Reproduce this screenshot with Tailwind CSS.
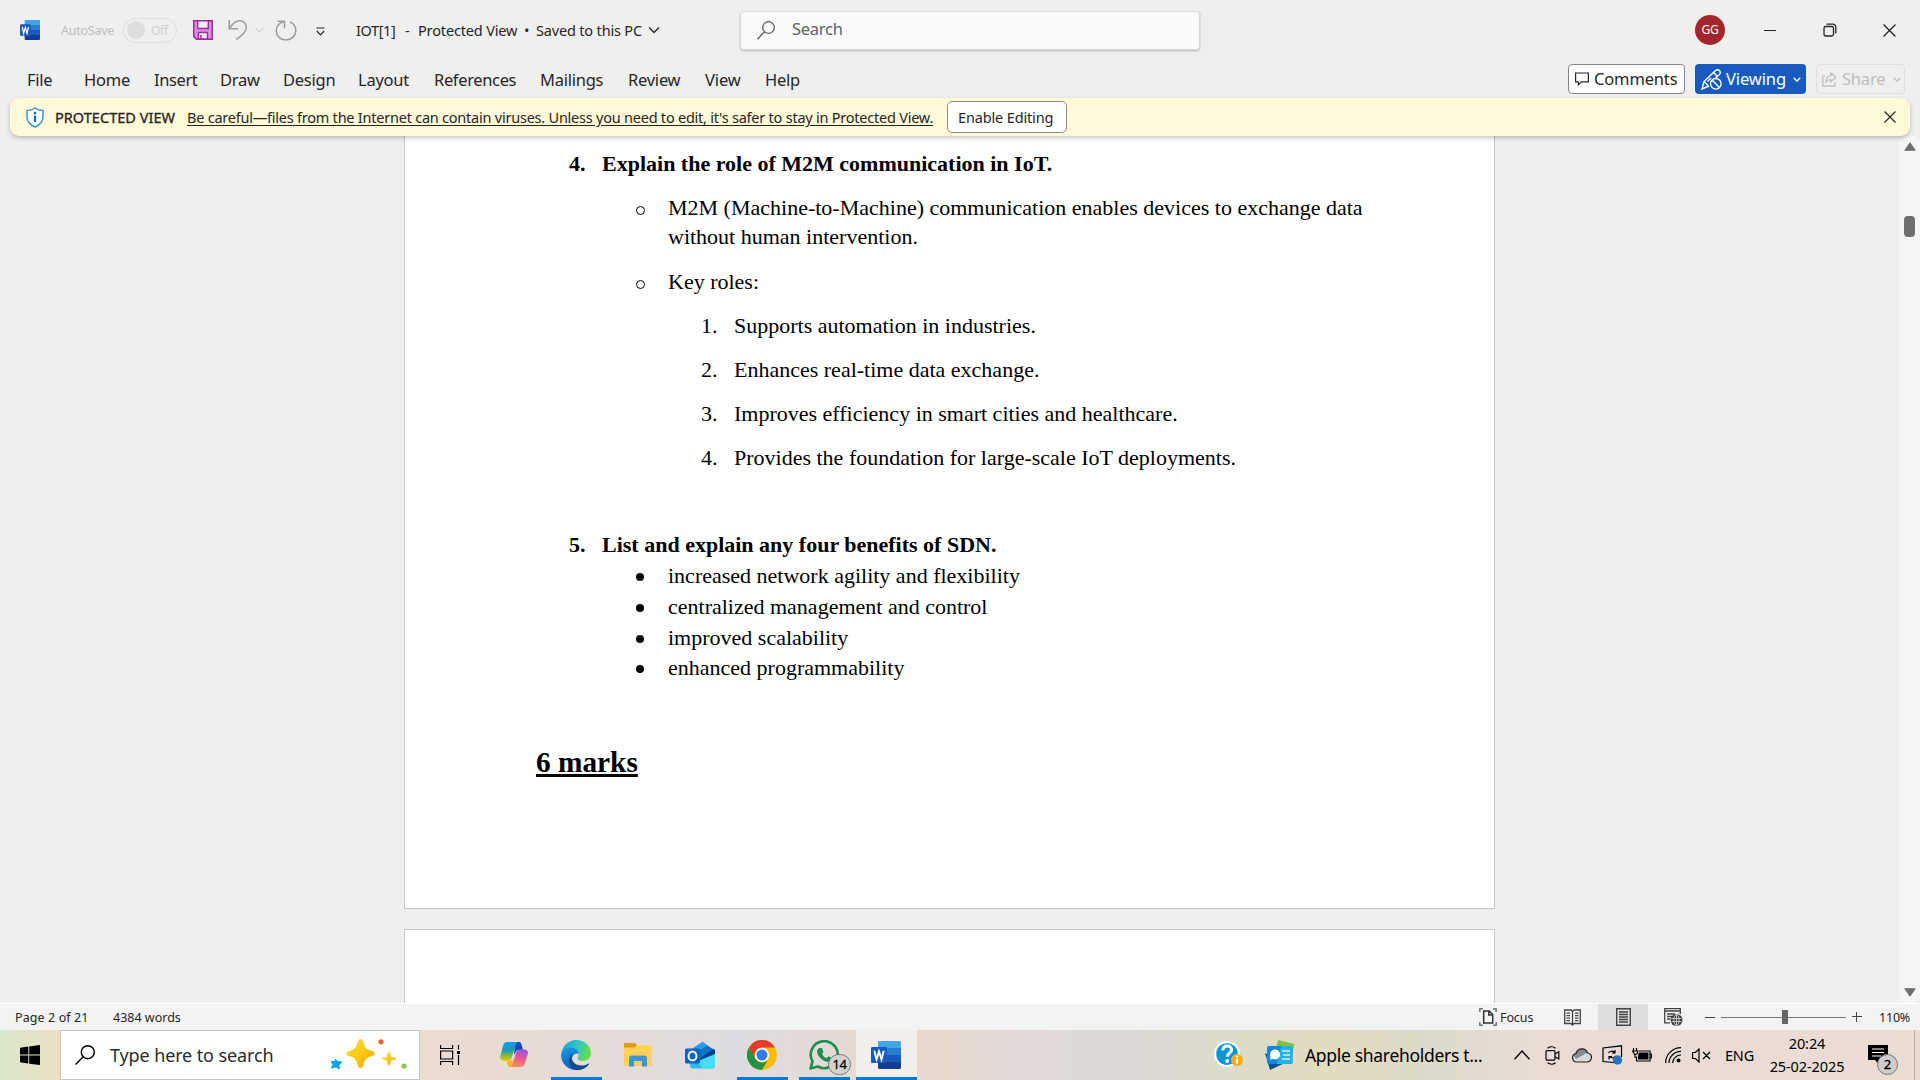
<!DOCTYPE html>
<html lang="en">
<head>
<meta charset="utf-8">
<title>IOT[1] - Protected View - Word</title>
<script src="https://cdn.jsdelivr.net/npm/@tailwindcss/browser@4"></script>
</head>
<body class="flex h-[1080px] w-[1920px] flex-col overflow-hidden bg-[#efefef] font-['Noto_Sans','Open_Sans',sans-serif] text-[#262626] whitespace-nowrap">

<svg class="hidden">
  <symbol id="word" viewBox="0 0 30 28">
    <path d="M8 0h20.500a1.500 1.500 0 0 1 1.500 1.500V7H7V1.500A1.500 1.500 0 0 1 8 0z" fill="#41a5ee"/>
    <path d="M7 7h23v7H7z" fill="#2b7cd3"/><path d="M7 14h23v7H7z" fill="#185abd"/>
    <path d="M7 21h23v5.500a1.500 1.500 0 0 1-1.500 1.500H8.500A1.500 1.500 0 0 1 7 26.500z" fill="#103f91"/>
    <rect x="0" y="6" width="16" height="16" rx="1.300" fill="#185abd"/>
    <path d="M3.300 9.800l2.200 8.600 2.500-8 2.500 8 2.200-8.600" fill="none" stroke="#fff" stroke-width="1.900"/>
  </symbol>
  <symbol id="chev" viewBox="0 0 12 8"><path d="M1 1.500l5 5 5-5" fill="none" stroke="currentColor" stroke-width="1.300"/></symbol>
  <symbol id="x" viewBox="0 0 12 12"><path d="M.5.5l11 11M11.500.5l-11 11" fill="none" stroke="currentColor" stroke-width="1.200"/></symbol>
</svg>

<!-- Title bar -->
<header class="flex h-[60px] shrink-0 items-center text-[14.5px] tracking-[-0.250px]">
  <svg class="ml-5 h-5 w-5" viewBox="0 0 30 28" preserveAspectRatio="none"><use href="#word"/></svg>
  <span class="ml-[21px] w-[62px] pt-[2px] text-[12.5px] text-[#bebebe]">AutoSave</span>
  <div class="flex h-[25px] w-[54px] items-center rounded-full border border-[#dedede] pl-[3px]">
    <span class="h-[18px] w-[18px] rounded-full bg-[#dedede]"></span>
    <span class="ml-[6px] pt-[1px] text-[12px] text-[#cfcfcf]">Off</span>
  </div>
  <svg class="ml-4 h-5 w-5" viewBox="0 0 20 20"><path d="M.75.750h18.500v18.500H3.500L.75 16.500z" fill="#d98fdc" stroke="#9a2d9f" stroke-width="1.500"/><path d="M4.700.8h10.600v7.700H4.700zM5.500 19v-6.500h9V19z" fill="#efefef" stroke="#9a2d9f" stroke-width="1.400"/><path d="M8 15v4" stroke="#9a2d9f" stroke-width="1.500"/></svg>
  <svg class="ml-[15px] h-5 w-5" viewBox="0 0 20 20" fill="none" stroke="#9b9b9b" stroke-width="1.500"><path d="M1.200 0v8.800H10M1.500 8.500C4 4.500 7.500.8 11.500.8c4 0 6.800 2.800 6.800 6.400 0 4.300-4.300 8.500-10.300 12.300"/></svg>
  <svg class="ml-[7px] h-[6px] w-[9px] text-[#bdbdbd]"><use href="#chev"/></svg>
  <svg class="ml-[11px] h-[21px] w-[22px]" viewBox="0 0 22 21" fill="none" stroke="#9b9b9b" stroke-width="1.500"><path d="M2.500 1.200h7v7M9.300 1.500C4.600 2.300 1.200 6 1.200 10.800c0 5.200 4.300 9.200 9.800 9.200s9.800-4 9.800-9.200c0-4.300-2.400-7.400-5.800-8.800"/></svg>
  <svg class="mt-[2px] ml-[19px] h-[9px] w-[9px]" viewBox="0 0 9 9" fill="none" stroke="#262626" stroke-width="1.200"><path d="M.5 1h8M.8 4l3.700 3.800L8.200 4"/></svg>
  <div class="mt-[1px] flex">
    <span class="ml-[31px] w-[49px] tracking-[-0.400px]">IOT[1]</span><span class="w-[13px]">-</span>
    <span class="w-[106px] tracking-[-0.150px]">Protected View</span><span class="w-[12px]">•</span><span class="w-[112px] tracking-[-0.170px]">Saved to this PC</span>
  </div>
  <svg class="h-[8px] w-[12px]"><use href="#chev"/></svg>
  <div class="ml-[80px] flex h-[39px] w-[460px] items-center rounded-[4px] border border-[#dcdcdc] bg-[#fafafa] shadow-[0_1px_2px_rgba(0,0,0,0.250)]">
    <svg class="ml-4 h-[19px] w-[18px]" viewBox="0 0 18 19" fill="none" stroke="#616161" stroke-width="1.300"><circle cx="11.500" cy="6.500" r="5.800"/><path d="M7.500 10.700L.5 18.300"/></svg>
    <span class="ml-[17px] -mt-px text-[16.5px] text-[#616161]">Search</span>
  </div>
  <span class="ml-[495px] flex h-[30px] w-[30px] items-center justify-center rounded-full bg-[#a4262c] text-[12px] text-white">GG</span>
  <span class="ml-[39px] h-[1px] w-[12px] bg-[#262626]"></span>
  <svg class="ml-[47px] h-[14px] w-[14px]" viewBox="0 0 14 14" fill="none" stroke="#262626" stroke-width="1.300"><rect x="1" y="3.500" width="9.500" height="9.500" rx="1.800"/><path d="M3.500 1.200h6.300a3 3 0 0 1 3 3v6.300"/></svg>
  <svg class="ml-[46px] h-[13px] w-[13px]"><use href="#x"/></svg>
</header>

<!-- Ribbon tabs -->
<nav class="flex h-[38px] shrink-0 items-center pl-[27px] text-[16.5px] tracking-[-0.250px]">
  <div class="flex w-[1541px] pt-[2px]">
    <span class="w-[57px]">File</span><span class="w-[70px]">Home</span><span class="w-[66px] tracking-[-0.400px]">Insert</span><span class="w-[63px]">Draw</span><span class="w-[75px]">Design</span><span class="w-[76px]">Layout</span><span class="w-[106px] tracking-[-0.350px]">References</span><span class="w-[88px]">Mailings</span><span class="w-[77px]">Review</span><span class="w-[60px] tracking-[-0.100px]">View</span><span>Help</span>
  </div>
  <div class="flex h-[30px] w-[117px] items-center rounded-[4px] border border-[#858585] bg-white pl-[6px] tracking-[-0.150px]">
    <svg class="h-[14px] w-[14px]" viewBox="0 0 14 14" fill="none" stroke="#262626" stroke-width="1.200"><path d="M.6 1h12.800v8.800H6.500L3.300 12.800V9.800H.6z"/></svg>
    <span class="ml-[5px]">Comments</span>
  </div>
  <div class="ml-[10px] flex h-[30px] w-[111px] items-center rounded-[4px] bg-[#185abd] pl-[6px] text-white tracking-[-0.100px]">
    <svg class="h-[21px] w-[21px]" viewBox="0 0 21 21" fill="none" stroke="#fff" stroke-width="1.400"><path d="M8 17l-7 3 2-7.500L14.500 1.500c1.300-1.200 3-1 4 .1s1 2.700-.1 3.800L14.500 9M12.500 3.500l4.300 4.300M3 12.500l4 4M10 9L6.500 12.500"/><circle cx="14.800" cy="14.800" r="5.300"/><path d="M11 11l7.500 7.500"/></svg>
    <span class="ml-[4px] w-[67px]">Viewing</span>
    <svg class="h-[5px] w-[8px]" viewBox="0 0 8 5"><path d="M.7.700L4 4 7.300.7" fill="none" stroke="#fff" stroke-width="1.300"/></svg>
  </div>
  <div class="ml-[10px] flex h-[30px] w-[89px] items-center rounded-[4px] border border-[#dfdfdf] pl-[5px] text-[#bdbdbd] tracking-[-0.200px]">
    <svg class="h-[15px] w-[15px]" viewBox="0 0 15 15" fill="none" stroke="#bdbdbd" stroke-width="1.200"><path d="M3.500 4H.8v10.200h12V10M8.800 1l5 4.500-5 4.300V7.500C6.500 7.500 4.800 8.500 3.500 10.300 4 6.500 5.800 4 8.800 3.500z"/></svg>
    <span class="ml-[5px] w-[51px]">Share</span>
    <svg class="h-[5px] w-[8px]" viewBox="0 0 8 5"><path d="M.7.700L4 4 7.300.7" fill="none" stroke="#bdbdbd" stroke-width="1.300"/></svg>
  </div>
</nav>

<!-- Protected view banner -->
<div class="z-10 mx-[10px] flex h-[38px] shrink-0 items-center rounded-[9px] bg-[#fef9d6] pl-[16px] text-[14.5px] tracking-[-0.230px] shadow-[0_2px_4px_rgba(0,0,0,0.230)]">
  <svg class="h-[21px] w-[18px]" viewBox="0 0 18 21"><path d="M9 1c2.300 1.700 4.700 2.500 8 2.600v6.200c0 4.900-3 8.100-8 10.200-5-2.100-8-5.300-8-10.200V3.600C4.300 3.500 6.700 2.700 9 1z" fill="#fff" stroke="#3596d3" stroke-width="1.500"/><path d="M9 8.500V15" stroke="#0f6cbd" stroke-width="2.200"/><circle cx="9" cy="6" r="1.300" fill="#0f6cbd"/></svg>
  <span class="ml-[11px] w-[132px] pt-[1px] tracking-[0.030px] [-webkit-text-stroke:0.300px_#262626]">PROTECTED VIEW</span>
  <span class="w-[760px] pt-[1px] underline underline-offset-[2px]">Be careful—files from the Internet can contain viruses. Unless you need to edit, it's safer to stay in Protected View.</span>
  <span class="flex h-[32px] w-[120px] items-center rounded-[5px] border border-[#8a8a8a] bg-white pt-[1px] pl-[10px] tracking-[-0.150px]">Enable Editing</span>
  <svg class="ml-[817px] h-[12px] w-[12px]"><use href="#x"/></svg>
</div>

<!-- Document area -->
<main class="flex h-[867px] shrink-0">
  <div class="ml-[404px] mr-[404px] flex w-[1091px] flex-col gap-5 overflow-hidden">
    <article class="flex h-[773px] shrink-0 flex-col border border-t-0 border-[#c6c6c6] bg-white pt-[13px] font-['Liberation_Serif','Times_New_Roman',serif] text-[22px] leading-[29px] text-black">
      <h3 class="ml-[164px] flex font-bold"><span class="w-[33px]">4.</span>Explain the role of M2M communication in IoT.</h3>
      <div class="mt-[15px] ml-[231px] flex"><span class="mt-[13px] mr-[23px] h-[9px] w-[9px] rounded-full border border-black"></span><p>M2M (Machine-to-Machine) communication enables devices to exchange data<br>without human intervention.</p></div>
      <div class="mt-[16px] ml-[231px] flex"><span class="mt-[13px] mr-[23px] h-[9px] w-[9px] rounded-full border border-black"></span><p>Key roles:</p></div>
      <ol class="mt-[15px] ml-[296px] flex flex-col gap-[15px]">
        <li class="flex"><span class="w-[33px]">1.</span>Supports automation in industries.</li>
        <li class="flex"><span class="w-[33px]">2.</span>Enhances real-time data exchange.</li>
        <li class="flex"><span class="w-[33px]">3.</span>Improves efficiency in smart cities and healthcare.</li>
        <li class="flex"><span class="w-[33px]">4.</span>Provides the foundation for large-scale IoT deployments.</li>
      </ol>
      <h3 class="mt-[58px] ml-[164px] flex font-bold"><span class="w-[33px]">5.</span>List and explain any four benefits of SDN.</h3>
      <ul class="mt-[2px] ml-[231px] flex flex-col gap-[2px]">
        <li class="flex items-center"><span class="mt-[2px] mr-[24px] h-[8px] w-[8px] rounded-full bg-black"></span>increased network agility and flexibility</li>
        <li class="flex items-center"><span class="mt-[2px] mr-[24px] h-[8px] w-[8px] rounded-full bg-black"></span>centralized management and control</li>
        <li class="flex items-center"><span class="mt-[2px] mr-[24px] h-[8px] w-[8px] rounded-full bg-black"></span>improved scalability</li>
        <li class="-mt-px flex items-center"><span class="mt-[2px] mr-[24px] h-[8px] w-[8px] rounded-full bg-black"></span>enhanced programmability</li>
      </ul>
      <h2 class="mt-[60px] ml-[131px] text-[29.33px] leading-[40px] font-bold underline decoration-[3px] underline-offset-[2px]">6 marks</h2>
    </article>
    <article class="h-[200px] shrink-0 border border-[#c6c6c6] bg-white"></article>
  </div>
  <div class="flex w-[21px] flex-col items-center rounded-[8px] bg-[#f5f5f5]">
    <svg class="mt-[6px] h-[9px] w-[12px]" viewBox="0 0 12 9"><path d="M6 .8L11.200 8.300H.8z" fill="#6e6e6e" stroke="#6e6e6e" stroke-linejoin="round"/></svg>
    <span class="mt-[65px] h-[21px] w-[11px] rounded-[4px] bg-[#6e6e6e]"></span>
    <svg class="mt-[751px] h-[9px] w-[12px]" viewBox="0 0 12 9"><path d="M6 8.200L11.200.7H.8z" fill="#6e6e6e" stroke="#6e6e6e" stroke-linejoin="round"/></svg>
  </div>
</main>

<!-- Status bar -->
<section class="flex h-[27px] shrink-0 items-center border-t border-white bg-[#f3f3f3] pl-[15px] text-[12.5px]">
  <span class="w-[98px] pt-[2px] tracking-[0.100px]">Page 2 of 21</span><span class="w-[1366px] pt-[2px]">4384 words</span>
  <svg class="h-[18px] w-[18px]" viewBox="0 0 18 18" fill="none" stroke="#333" stroke-width="1.500"><path d="M.8 4V.8H4M14 .8h3.200V4M.8 14v3.200H4M14 17.200h3.200V14" stroke="#777"/><path d="M4.700 3h5.500l3.500 3.500V15h-9zM9.800 3v4h4"/></svg>
  <span class="ml-[3px] w-[64px] pt-[2px] tracking-[-0.100px]">Focus</span>
  <svg class="h-[17px] w-[17px]" viewBox="0 0 17 17" fill="none" stroke="#444" stroke-width="1.300"><path d="M8.500 2.500L7 1H.7v13.500H7l1.500 1.500L10 14.500h6.300V1H10zM8.500 2.500V16M2.500 4.200H6M2.500 6.700H6M2.500 9.200H6M2.500 11.700H6M11 4.200h3.500M11 6.700h3.500M11 9.200h3.500M11 11.700h3.500"/></svg>
  <div class="ml-[17px] flex h-[26px] w-[50px] items-center justify-center bg-[#dedede]"><svg class="h-[18px] w-[15px]" viewBox="0 0 15 18" fill="none" stroke="#444" stroke-width="1.400"><path d="M.7.700h13.600v16.600H.7zM3 4h9M3 6.500h9M3 9h9M3 11.500h9M3 14h9"/></svg></div>
  <svg class="ml-4 h-[18px] w-[19px]" viewBox="0 0 19 18" fill="none" stroke="#444" stroke-width="1.300"><path d="M6 14.800H.7V.7h15.600V6M.7 3h15.600M3 6h8M3 8.500h5M3 11h3"/><circle cx="12.500" cy="12" r="6" fill="#3c3c3c" stroke="none"/><path d="M7.500 10.500h10M7.500 13.500h10M12.500 6.500v11" stroke="#e5e5e5" stroke-width=".8"/><ellipse cx="12.500" cy="12" rx="2.700" ry="5.300" stroke="#e5e5e5" stroke-width=".8"/></svg>
  <span class="ml-[22px] h-[1px] w-[10px] bg-[#444]"></span>
  <div class="ml-[6px] flex h-[14px] w-[125px] items-center"><span class="h-[1px] w-[61px] bg-[#777]"></span><span class="h-[14px] w-[6px] bg-[#666]"></span><span class="h-[1px] w-[58px] bg-[#777]"></span></div>
  <svg class="ml-[6px] h-[10px] w-[10px]" viewBox="0 0 10 10" stroke="#444"><path d="M0 4.500h10M4.500 0v10"/></svg>
  <span class="ml-[17px] pt-[2px] tracking-[-0.200px]">110%</span>
</section>

<!-- Taskbar -->
<footer class="flex h-[50px] shrink-0 items-center bg-[linear-gradient(90deg,#d9e8cc_0px,#ebdfc2_60px,#eddccf_420px,#e6dbd5_560px,#dedce0_740px,#e6dad3_850px,#e8d9ce_940px,#e2dad8_1020px,#dcd9d6_1130px,#dedcc9_1240px,#e2dcc0_1320px,#dcdac8_1420px,#e2dcd0_1480px,#eadcd5_1540px,#eadcd5_1750px,#ebddd2_1920px)] text-black">
  <div class="flex h-[50px] w-[60px] items-center justify-center"><svg class="h-5 w-5" viewBox="0 0 20 20"><path d="M0 2.800L8.300 1.500V9.500H0zM9.200 1.400L20 0v9.500H9.200zM0 10.500h8.300v8.100L0 17.300zM9.200 10.500H20V20L9.200 18.700z"/></svg></div>
  <div class="flex h-[50px] w-[360px] items-center border border-[#c6c6c6] bg-white pl-[14px]">
    <svg class="h-5 w-5" viewBox="0 0 20 20" fill="none" stroke="#000" stroke-width="1.400"><circle cx="12.800" cy="7.200" r="6.500"/><path d="M8.200 11.800L.5 19.500"/></svg>
    <span class="ml-[15px] w-[221px] text-[18px] tracking-[-0.120px] text-[#2b2b2b]">Type here to search</span>
    <svg class="h-[32px] w-[76px]" viewBox="0 0 76 32"><defs><linearGradient id="gold" x2="1" y2="1"><stop stop-color="#ffe04a"/><stop offset=".55" stop-color="#fdc60e"/><stop offset="1" stop-color="#ee9d1c"/></linearGradient></defs><path d="M29.500 0c2 0 2.500 1.500 3.300 4.500 1.200 4 2.500 5.500 6 6.700 3.500 1.100 5 1.600 5 3.300s-1.500 2.200-5 3.300c-3.500 1.200-4.800 2.700-6 6.700-.8 3-1.300 4.500-3.300 4.500s-2.500-1.500-3.300-4.500c-1.200-4-2.500-5.500-6-6.700-3.500-1.100-5-1.600-5-3.300s1.500-2.200 5-3.300c3.500-1.200 4.800-2.700 6-6.700C27 1.500 27.500 0 29.500 0z" fill="url(#gold)"/><path d="M58 12.500c1.200 0 1.300 4.500 2.500 5.500s4.500 0 4.500 1.500-3.300.8-4.500 2-1.200 5-2.500 5-1.300-4-2.500-5-4.500-.5-4.500-2 3.300-.5 4.500-1.500 1.200-5.500 2.500-5.500z" fill="url(#gold)"/><path d="M4.500 20l2.300 2.700 4.200.3-3 2.700.3 4.300-3.300-2-4.500 1 1.500-3.700L0 22.500l4 .2z" fill="#00a9ee" stroke="#00a9ee" stroke-linejoin="round"/><circle cx="50" cy="2.800" r="2.600" fill="#f4652c"/><circle cx="73" cy="27" r="2.600" fill="#8dc73f"/></svg>
  </div>
  <svg class="ml-5 h-5 w-5" viewBox="0 0 20 20" fill="none" stroke="#000" stroke-width="1.200"><path d="M.6 0v3.500h12V0M.6 20v-3.500h12V20M.6 6h12v8H.6zM18.500 0v4.500M18.500 10v10"/><path d="M17 6h3v3h-3z" fill="#000" stroke="none"/></svg>
  <!-- Copilot -->
  <svg class="ml-[40px] h-[26px] w-[28px]" viewBox="0 0 28 26"><defs><linearGradient id="cpa" x2="0" y2="1"><stop stop-color="#159df0"/><stop offset=".4" stop-color="#1599c0"/><stop offset=".7" stop-color="#7cb846"/><stop offset="1" stop-color="#f5ca16"/></linearGradient><linearGradient id="cpb" x1=".5" x2=".2" y2="1"><stop stop-color="#a54fe0"/><stop offset=".5" stop-color="#ef5a92"/><stop offset="1" stop-color="#fb9550"/></linearGradient></defs>
    <path d="M15 0h4c2 0 2.500 2 3.200 5l.8 3h-6l-3 5z" fill="#1547b8"/><path d="M8 18l5 .500-1 6.500H10c-1.500 0-2.300-1.500-3-4z" fill="#f8b52a"/>
    <path d="M7 0h11c-2 1-2.500 3-3 5l-3 10c-.8 2.500-2 4-4.500 4H4c-3 0-4.500-2-3.700-5L3 4C3.700 1.500 5 0 7 0z" fill="url(#cpa)"/>
    <path d="M20 7.500h4.500c2.500 0 4 2 3.300 4.500L25 21c-.8 2.500-2.300 4-4.500 4H9.500c2-.500 2.700-2 3.300-4L16 11c.8-2.500 2-3.500 4-3.500z" fill="url(#cpb)"/></svg>
  <!-- Edge -->
  <div class="ml-[23px] flex h-[50px] w-[51px] flex-col border-b-[3px] border-[#0078d7] pt-[10px] pl-[10px]">
    <svg class="h-[30px] w-[30px] shrink-0" viewBox="0 0 30 30"><defs><linearGradient id="eda" x2="1" y2=".3"><stop stop-color="#1b9de2"/><stop offset=".55" stop-color="#2cc3c9"/><stop offset="1" stop-color="#62dd52"/></linearGradient><linearGradient id="edb" x2=".4" y2="1"><stop stop-color="#1d9ce0"/><stop offset="1" stop-color="#0b62c4"/></linearGradient></defs>
      <path d="M1 11C3 4 8.500 0 15 0c8.500 0 15 6 15 13 0 5-3.500 8-8 8-3.500 0-5.500-1.300-5.500-2.500 0-1 1.200-1.500 1.200-4C17.700 11 14.500 8 10.500 8 6 8 2 10 0 15z" fill="url(#eda)"/>
      <path d="M0 15C1 10 5 7.500 10 7.500c4.500 0 7.500 3 7.700 6.500-4-2-8 2-6.200 8 1 3.500 3.500 6.500 7.500 7.500-2 .500-3 .500-4 .500C6.500 30 0 23 0 15z" fill="url(#edb)"/>
      <path d="M10.500 17c0 5 5 8.500 10 8.500 3 0 5-.8 6.500-1.800.8-.5 1.200.2.800.8C25.500 28 21 30 16.500 30 10 29 6 23 8.500 17.500 9.500 15 11 14 12 14c-1 1-1.500 2-1.500 3z" fill="#114a8b"/></svg>
  </div>
  <!-- File Explorer -->
  <svg class="ml-[22px] h-[24px] w-[28px]" viewBox="0 0 28 24"><path d="M0 1.500C0 .5.500 0 1.500 0H11l2 2v3H0z" fill="#dd9a09"/><path d="M0 4.500h10.500L13 2.300h13.500c.8 0 1 .5 1 1V23H0z" fill="#ffd155"/><path d="M5 23.500V15c0-1.500 1-2.500 2.500-2.500h13c1.500 0 2.500 1 2.500 2.500v8.500h-5V18H10v5.500z" fill="#3b97dd"/></svg>
  <!-- Outlook -->
  <svg class="ml-[33px] h-[27px] w-[30px]" viewBox="0 0 30 27"><path d="M4 9L17.500 0 30 8.500 17 18 4 14z" fill="#1272c8"/><path d="M5 8.500L17.500 0l5 3.500L8 12z" fill="#2a9be8"/><path d="M14 17L29 6.500l1 2.500v6L18 20z" fill="#0a3f8c"/><path d="M5 15l12 6 13-9v12c0 1.500-1 2.500-2.500 2.500h-20C6 26.500 5 25.500 5 24z" fill="#29bdf0"/><path d="M30 12v12c0 1.500-1 2.500-2.500 2.500H18l-6-7z" fill="#48dcfb"/><rect y="6.500" width="15" height="15" rx="1.500" fill="#0a64bd"/><ellipse cx="7.500" cy="14" rx="4" ry="4.500" fill="none" stroke="#fff" stroke-width="2"/></svg>
  <!-- Chrome -->
  <div class="ml-[22px] flex h-[50px] w-[51px] flex-col border-b-[3px] border-[#0078d7] pt-[10px] pl-[10px]">
    <svg class="h-[30px] w-[30px] shrink-0" viewBox="0 0 30 30"><circle cx="15" cy="15" r="15" fill="#fbbc05"/><path d="M2 7.500A15 15 0 0 1 28 7.500H15A7.500 7.500 0 0 0 8.500 18.750z" fill="#e33b2e"/><path d="M2 7.500A15 15 0 0 0 15 30l6.500-11.250A7.500 7.500 0 0 1 8.500 18.750z" fill="#229342"/><circle cx="15" cy="15" r="7.200" fill="#fff"/><circle cx="15" cy="15" r="5.500" fill="#3479ee"/></svg>
  </div>
  <!-- WhatsApp -->
  <div class="relative ml-[11px] flex h-[50px] w-[51px] flex-col border-b-[3px] border-[#0078d7] pt-[10px] pl-[10px]">
    <svg class="h-[30px] w-[30px] shrink-0" viewBox="0 0 30 30"><path d="M1.500 28.500l2-7.200A13.500 13.500 0 1 1 8.800 26.500z" fill="none" stroke="#1c8f55" stroke-width="2.600" stroke-linejoin="round"/><path d="M10.500 8l2.500 0 1.500 4-1.500 2c1 2 2.500 3.300 4.500 4.300l2-2 3.500 2c0 2-1.500 3.500-4 3.700C13.500 21.500 8.300 16 8 11.500 8 10 9 8.500 10.500 8z" fill="#1c8f55"/></svg>
    <span class="absolute top-[24px] left-[29px] flex h-[21px] w-[23px] items-center justify-center rounded-full border border-[#777] bg-[#d5d2cf] text-[13px] tracking-[-0.500px] [-webkit-text-stroke:0.300px_#000]">14</span>
  </div>
  <!-- Word -->
  <div class="ml-[6px] flex h-[50px] w-[61px] flex-col border-b-[3px] border-[#0078d7] bg-[#f4efec] pt-[11px] pl-[15px]"><svg class="h-[28px] w-[30px] shrink-0"><use href="#word"/></svg></div>

  <svg class="ml-[297px] h-[28px] w-[30px]" viewBox="0 0 30 28"><circle cx="13" cy="13" r="13" fill="#fff"/><circle cx="13" cy="13" r="10.800" fill="#0796d6"/><path d="M8.800 9.300c.2-2.700 2-4.300 4.500-4.300s4.300 1.500 4.300 3.700c0 3.300-4.300 3.300-4.300 7" fill="none" stroke="#fff" stroke-width="3"/><circle cx="13.200" cy="20" r="1.900" fill="#fff"/><circle cx="23" cy="19" r="6" fill="#f9ab18"/><path d="M23 18v4.500M23 14.500v2" stroke="#fff" stroke-width="2"/></svg>
  <svg class="ml-[21px] h-[30px] w-[30px]" viewBox="0 0 30 30"><path d="M13 0l16.500 4-4 16L9 16z" fill="#7fbf4a"/><path d="M0 13l20 10-15 7z" fill="#0f4f93"/><rect x="2" y="6" width="25.500" height="18" rx="2" fill="#1385dd"/><path d="M16 6h9.500a2 2 0 0 1 2 2v14a2 2 0 0 1-2 2H12z" fill="#23b2e5"/><path d="M5 19.500l.5-3a5 5 0 1 1 2.500 2.500z" fill="#fff"/><path d="M17 11h8M18 15h7M17 19h8" stroke="#d8f5ff" stroke-width="1.500"/></svg>
  <span class="ml-[10px] w-[209px] text-[17.500px] tracking-[-0.310px]">Apple shareholders t...</span>
  <svg class="h-[10px] w-[16px]" viewBox="0 0 16 10" fill="none" stroke="#000" stroke-width="1.300"><path d="M.5 9.300L8 1l7.500 8.300"/></svg>
  <svg class="ml-[15px] h-[19px] w-[15px]" viewBox="0 0 15 19" fill="none" stroke="#000" stroke-width="1.200"><rect x="1" y="4.600" width="9" height="9.500" rx="1.300"/><path d="M10 8l3.800-2.200V13L10 10.800M2.500 2.200C5 .4 8.500.4 10.500 2.200M2.500 16.800c2.500 1.800 6 1.800 8 0"/></svg>
  <svg class="ml-[12px] h-[15px] w-[20px]" viewBox="0 0 20 15"><path d="M5 14a4.300 4.300 0 0 1-1-8.500C5 2.500 7.300.8 10 .8c2.800 0 4.800 1.700 5.500 4.200 2.300.3 4 2 4 4.300 0 2.700-2 4.700-4.500 4.700z" fill="#d9d9d9"/><path d="M1.500 7C2.300 6 3 5.700 4 5.500 5 2.500 7.300.8 10 .8c2.800 0 4.800 1.700 5.500 4.200-2 0-3 .7-4.300 2L4 11z" fill="#8a8a8a"/><path d="M5 14a4.300 4.300 0 0 1-1-8.500C5 2.500 7.300.8 10 .8c2.800 0 4.800 1.700 5.500 4.200 2.300.3 4 2 4 4.300 0 2.700-2 4.700-4.500 4.700z" fill="none" stroke="#222" stroke-width="1.200"/></svg>
  <svg class="ml-[10px] h-[20px] w-[21px]" viewBox="0 0 21 20" fill="none" stroke="#000" stroke-width="1.200"><path d="M12 17.500L1 16.500V3L19.500.8V12"/><path d="M6.500 8c1-2 4-2.500 6-.500M13 5v3h-3M13.500 11c-1 2-4 2.500-6 .500M7 14.500v-3h3"/><circle cx="15.500" cy="15" r="4.700" fill="#2b73bf" stroke="none"/></svg>
  <svg class="ml-[9px] h-[14px] w-[20px]" viewBox="0 0 20 14"><path d="M6.500 3h11.500v10H4.500V8.500M18.500 6h1v4h-1" fill="none" stroke="#000" stroke-width="1.200"/><path d="M7 4.500h9.500v7H6V8z"/><path d="M1.500 0v3M4.500 0v3M.5 3h5v2.500L3 7zM3 7v3" fill="none" stroke="#000" stroke-width="1.200"/></svg>
  <svg class="ml-[13px] h-[16px] w-[16px]" viewBox="0 0 16 16" fill="none" stroke="#000" stroke-width="1.200"><path d="M.6 16C.6 7.500 7.500.6 16 .6M4 16C4 9.500 9.500 4.300 16 4.300M7.700 16c0-4.500 3.800-8 8.300-8"/><circle cx="13.500" cy="13.500" r="2" fill="#000" stroke="none"/></svg>
  <svg class="ml-[11px] h-[15px] w-[19px]" viewBox="0 0 19 15" fill="none" stroke="#000" stroke-width="1.200"><path d="M.6 4.500h2.800L7 1v13L3.400 10.500H.6zM11 4l7 7M18 4l-7 7"/></svg>
  <span class="ml-[14px] w-[43px] pt-[1px] text-[14.500px] tracking-[-0.200px]">ENG</span>
  <div class="flex w-[78px] flex-col items-center text-[14.500px] leading-[23px] tracking-[-0.100px]"><span>20:24</span><span>25-02-2025</span></div>
  <div class="relative ml-[22px] h-[50px] w-[46px]">
    <svg class="mt-[15px] h-[20px] w-[20px]" viewBox="0 0 20 20"><path d="M0 0h20v15h-9v4.500L7 15H0z"/><path d="M4 4h12M4 7.500h12M4 11h9" stroke="#fff" stroke-width="1.200"/></svg>
    <span class="absolute top-[24px] left-[9px] flex h-[21px] w-[21px] items-center justify-center rounded-full border border-[#777] bg-[#cfccca] text-[13px] [-webkit-text-stroke:0.300px_#000]">2</span>
  </div>
  <span class="h-[50px] w-px bg-[#b8b0aa]"></span>
</footer>
</body>
</html>
